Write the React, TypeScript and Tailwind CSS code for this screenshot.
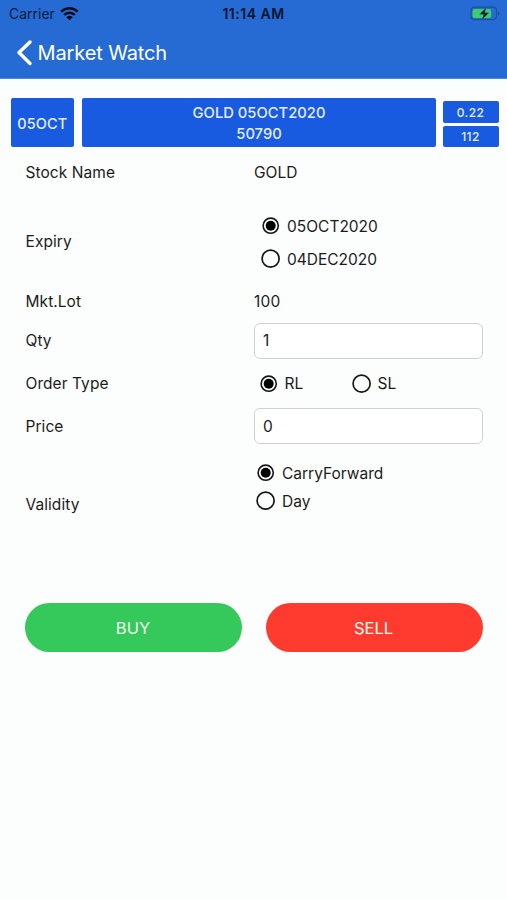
import type { ReactNode } from "react";

function Radio({ checked = false }: { checked?: boolean }) {
  return (
    <svg className="size-5 shrink-0" viewBox="0 0 20 20" fill="none">
      {checked ? (
        <>
          <circle cx="9.7" cy="9.7" r="7.6" fill="#fff" stroke="#151515" strokeWidth="1.6" />
          <circle cx="9.7" cy="9.7" r="5" fill="#000" />
        </>
      ) : (
        <circle cx="9.6" cy="9.7" r="8.5" stroke="#151515" strokeWidth="1.7" />
      )}
    </svg>
  );
}

function Option({ label, checked, className = "gap-[6px]" }: { label: string; checked?: boolean; className?: string }) {
  return (
    <div className={`flex h-6 items-center ${className}`}>
      <Radio checked={checked} />
      <span className="pt-px">{label}</span>
    </div>
  );
}

function Row({ label, height, children }: { label: string; height: string; children: ReactNode }) {
  return (
    <div className={`flex items-center ${height}`}>
      <div className="w-[228.5px] shrink-0 pt-[1.5px] tracking-[0.06px]">{label}</div>
      <div className="flex h-full flex-1 flex-col justify-center">{children}</div>
    </div>
  );
}

function Field({ value }: { value: string }) {
  return (
    <div className="flex h-9 w-[228.5px] items-center rounded-[6px] border border-[#cfd1d1] bg-white pl-2">
      <span className="pt-px">{value}</span>
    </div>
  );
}

export default function App() {
  return (
    <div className="h-[900px] w-[507px] overflow-hidden bg-[#fcfefd] font-['Inter','Liberation_Sans',sans-serif] text-[15.5px] leading-5 text-[#1b1b1b]">
      <header className="h-[79px] border-b border-[#4b8be0] bg-[#266bd3]">
        <div className="flex h-7 items-center justify-between pl-[9px] pr-[7px] text-black">
          <div className="flex w-[100px] items-center gap-[5.5px] text-[14px] text-[#071a38]">
            <span>Carrier</span>
            <svg className="h-[14px] w-[19px]" viewBox="0 0 19 14" fill="none" stroke="#020b18" strokeWidth="2.5">
              <path d="M1.2 4.6a11.8 11.8 0 0 1 16.6 0" />
              <path d="M4.2 7.9a7.5 7.5 0 0 1 10.6 0" />
              <path d="M9.5 13.3 6.4 10.2a4.5 4.5 0 0 1 6.2 0z" fill="#020b18" stroke="none" />
            </svg>
          </div>
          <span className="-ml-[2px] text-[14px] font-semibold tracking-[0.5px] text-[#03142e]">11:14 AM</span>
          <div className="flex w-[100px] justify-end">
            <svg className="h-4 w-[30px]" viewBox="0 0 30 16" fill="none">
              <rect x="1" y="1.2" width="25.5" height="12.5" rx="3.5" stroke="#1d4f9b" strokeWidth="1.2" />
              <rect x="2.6" y="2.9" width="18.6" height="9.2" rx="2" fill="#3cce68" />
              <path d="M28 5.2c2 .8 2 3.7 0 4.5z" fill="#1d4f9b" />
              <path d="m16 1.8-6.3 6.5h4L12.2 13.5l6.6-6.7h-4.2z" fill="#06150e" stroke="#266bd3" strokeWidth=".4" />
            </svg>
          </div>
        </div>
        <div className="flex h-[49px] items-center gap-[5px] pl-4 text-[20px] text-white">
          <svg className="h-7 w-[17px]" viewBox="0 0 17 28" fill="none">
            <path d="M14 3 3 13.6l11 10.8" stroke="#fff" strokeWidth="3.5" strokeLinecap="round" strokeLinejoin="round" />
          </svg>
          <h1 className="-ml-[0.5px] tracking-[-0.12px]">Market Watch</h1>
        </div>
      </header>

      <section className="mt-[19px] flex h-[49px] pl-[10.5px] text-center text-[15px] font-medium text-[#e5eeff]">
        <div className="flex w-[63.5px] items-center justify-center rounded-[2px] bg-[#185ae0] pt-[2px] text-[14.5px] tracking-[0.1px]">05OCT</div>
        <div className="ml-2 flex w-[354px] flex-col justify-center rounded-[2px] bg-[#185ae0] pt-[3px] text-[14.75px] leading-[21px]">
          <div>GOLD 05OCT2020</div>
          <div>50790</div>
        </div>
        <div className="ml-[6.5px] flex w-[56px] flex-col gap-[3px] pt-[3px] text-[12px] tracking-[0.4px]">
          <div className="flex flex-1 items-center justify-center rounded-[2px] bg-[#185ae0] pt-[2px]">0.22</div>
          <div className="flex flex-1 items-center justify-center rounded-[2px] bg-[#185ae0] pt-px">112</div>
        </div>
      </section>

      <main className="pl-[25.5px] pr-[24px]">
        <Row label="Stock Name" height="h-[50px]"><span className="pt-[1.5px]">GOLD</span></Row>
        <Row label="Expiry" height="h-[88px]">
          <div className="flex flex-col gap-[9px] pl-[7px] pt-[3px]">
            <Option label="05OCT2020" checked />
            <Option label="04DEC2020" />
          </div>
        </Row>
        <Row label="Mkt.Lot" height="h-8"><span className="pt-[1.5px] tracking-[0.2px]">100</span></Row>
        <Row label="Qty" height="h-[47px]"><Field value="1" /></Row>
        <Row label="Order Type" height="h-[39px]">
          <div className="flex pl-[5px]">
            <Option label="RL" checked className="w-[93px] gap-[5.5px]" />
            <Option label="SL" className="gap-[5.5px]" />
          </div>
        </Row>
        <Row label="Price" height="h-[46px]"><Field value="0" /></Row>
        <Row label="Validity" height="h-[110px]">
          <div className="flex h-full flex-col gap-1 pl-[2px] pt-3">
            <Option label="CarryForward" checked />
            <Option label="Day" />
          </div>
        </Row>
        <div className="-ml-[0.5px] mt-11 flex gap-6 text-[16.5px] text-[#eefdf3]">
          <button className="h-[49px] w-[217px] shrink-0 rounded-full bg-[#35c85b] pr-px">BUY</button>
          <button className="h-[49px] w-[217px] shrink-0 rounded-full bg-[#ff3b30] pr-[2px]">SELL</button>
        </div>
      </main>
    </div>
  );
}
